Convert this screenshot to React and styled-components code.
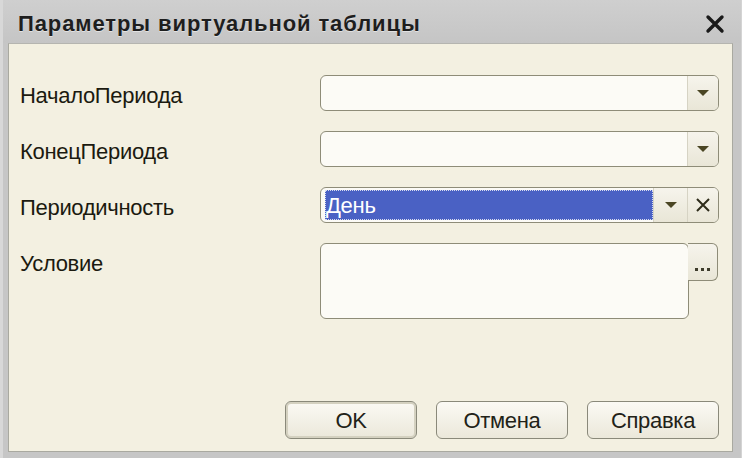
import styled, { createGlobalStyle } from "styled-components";

const GlobalStyle = createGlobalStyle`
  html, body {
    margin: 0;
    padding: 0;
  }
  body {
    width: 742px;
    height: 458px;
    overflow: hidden;
    font-family: "Liberation Sans", Arial, sans-serif;
  }
`;

const Window = styled.div`
  width: 742px;
  height: 458px;
  box-sizing: border-box;
  display: flex;
  flex-direction: column;
  background: #c6c6c6;
  border-left: 3px solid #d8d8d8;
  border-right: 1px solid #d4d4d4;
`;

const TitleBar = styled.div`
  height: 43px;
  flex: none;
  display: flex;
  align-items: center;
  justify-content: space-between;
  padding: 4px 16px 0 15px;
  box-sizing: border-box;
  background: linear-gradient(#cfcfcf, #c5c5c5);
`;

const Title = styled.div`
  font-size: 22px;
  font-weight: bold;
  color: #1e1e1e;
  letter-spacing: 0.9px;
  text-shadow: 0 1px 0 #e2e2e2;
`;

const CloseIcon = styled.svg`
  width: 20px;
  height: 20px;
`;

const Body = styled.div`
  flex: 1;
  margin: 0 8px 6px 5px;
  background: #f3f0e1;
  border: 1px solid #a9a9a0;
  border-top-color: #b5b5b0;
  box-sizing: border-box;
  display: flex;
  flex-direction: column;
  padding: 31px 13px 12px 11px;
`;

const Form = styled.div`
  display: grid;
  grid-template-columns: 300px 1fr;
  row-gap: 20px;
`;

const Label = styled.div`
  height: 36px;
  line-height: 42px;
  font-size: 22px;
  color: #1b1a10;
  letter-spacing: -0.3px;
`;

const Combo = styled.div`
  height: 36px;
  box-sizing: border-box;
  display: flex;
  border: 1px solid #8e8c78;
  border-radius: 6px;
  background: #fcfbf6;
  overflow: hidden;
`;

const InputArea = styled.div`
  flex: 1;
  display: flex;
  padding: 2px 0 2px 4px;
`;

const Selection = styled.div`
  flex: 1;
  background: #4a61c4;
  color: #ffffff;
  font-size: 22px;
  line-height: 31px;
  padding-left: 1px;
  outline: 1px dotted #d8dcf0;
  outline-offset: -1px;
  letter-spacing: -0.3px;

  & u {
    text-decoration-color: #e8e8e8;
  }
`;

const SideButton = styled.div`
  width: ${(p) => p.$w || 30}px;
  flex: none;
  display: flex;
  align-items: center;
  justify-content: center;
  border-left: 1px solid #d6d3c4;
  background: linear-gradient(#f6f4ec, #e9e6d7);
  color: #3a3820;
`;

const Arrow = styled.div`
  width: 0;
  height: 0;
  border-left: 6px solid transparent;
  border-right: 6px solid transparent;
  border-top: 6px solid #4b4624;
`;

const ConditionWrap = styled.div`
  display: flex;
  align-items: flex-start;
`;

const TextBox = styled.div`
  width: 369px;
  height: 76px;
  box-sizing: border-box;
  border: 1px solid #8e8c78;
  border-radius: 6px;
  background: #fcfbf6;
`;

const DotsButton = styled.div`
  width: 30px;
  height: 38px;
  box-sizing: border-box;
  border: 1px solid #8e8c78;
  border-left: none;
  border-radius: 0 6px 6px 0;
  margin-left: -1px;
  background: linear-gradient(#f6f4ec, #e9e6d7);
  display: flex;
  align-items: flex-end;
  justify-content: center;
  padding-bottom: 9px;
  gap: 3px;
`;

const Dot = styled.span`
  width: 3px;
  height: 3px;
  background: #3e3c2c;
`;

const Footer = styled.div`
  margin-top: auto;
  display: flex;
  justify-content: flex-end;
  gap: 19px;
  padding-right: 0;
`;

const Button = styled.div`
  width: 132px;
  height: 38px;
  box-sizing: border-box;
  border: 1px solid #8a897a;
  border-radius: 6px;
  background: linear-gradient(#fbfaf4, #ebe8da);
  display: flex;
  align-items: center;
  justify-content: center;
  padding-top: 2px;
  font-size: 22px;
  color: #222218;
  letter-spacing: -0.3px;
  box-shadow: ${(p) => (p.$default ? "inset 0 0 0 2px #d4d1c0" : "none")};
`;

function DropButton({ w }) {
  return (
    <SideButton $w={w}>
      <Arrow />
    </SideButton>
  );
}

export default function App() {
  return (
    <>
      <GlobalStyle />
      <Window>
        <TitleBar>
          <Title>Параметры виртуальной таблицы</Title>
          <CloseIcon viewBox="0 0 20 20">
            <path d="M3 3 L17 17 M17 3 L3 17" stroke="#1a1a1a" strokeWidth="3.4" strokeLinecap="round" />
          </CloseIcon>
        </TitleBar>
        <Body>
          <Form>
            <Label>НачалоПериода</Label>
            <Combo>
              <InputArea />
              <DropButton />
            </Combo>

            <Label>КонецПериода</Label>
            <Combo>
              <InputArea />
              <DropButton />
            </Combo>

            <Label>Периодичность</Label>
            <Combo>
              <InputArea>
                <Selection>
                  <u>Д</u>ень
                </Selection>
              </InputArea>
              <DropButton w={33} />
              <SideButton>
                <svg width="16" height="16" viewBox="0 0 16 16">
                  <path d="M2 2 L14 14 M14 2 L2 14" stroke="#2e2c1a" strokeWidth="2" />
                </svg>
              </SideButton>
            </Combo>

            <Label>Условие</Label>
            <ConditionWrap>
              <TextBox />
              <DotsButton>
                <Dot />
                <Dot />
                <Dot />
              </DotsButton>
            </ConditionWrap>
          </Form>
          <Footer>
            <Button $default>OK</Button>
            <Button>Отмена</Button>
            <Button>Справка</Button>
          </Footer>
        </Body>
      </Window>
    </>
  );
}
